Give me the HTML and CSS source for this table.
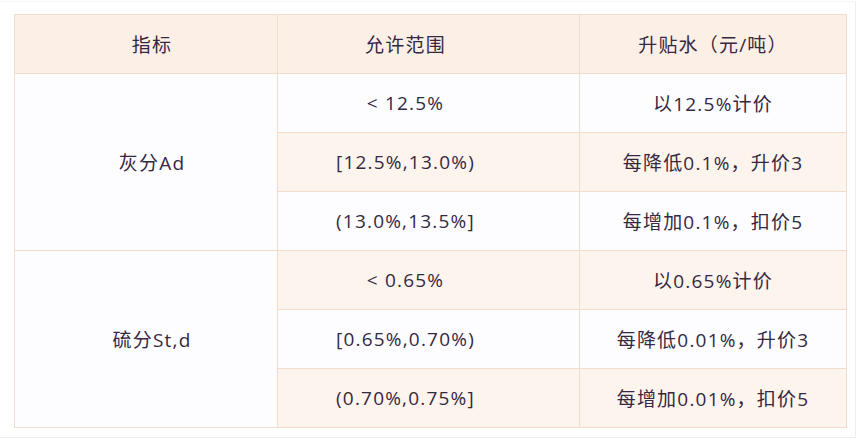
FILE: index.html
```html
<!DOCTYPE html>
<html lang="zh">
<head>
<meta charset="utf-8">
<link rel="stylesheet" href="styles.css">
</head>
<body>
<div class="card">
  <table class="grid">
    <colgroup>
      <col class="c1"><col class="c2"><col class="c3">
    </colgroup>
    <thead>
      <tr><th class="k1">指标</th><th class="k2">允许范围</th><th class="k3">升贴水（元/吨）</th></tr>
    </thead>
    <tbody>
      <tr><td class="name k1" rowspan="3">灰分Ad</td><td class="k2">&lt; 12.5%</td><td class="k3">以12.5%计价</td></tr>
      <tr class="alt"><td class="k2">[12.5%,13.0%)</td><td class="k3">每降低0.1%，升价3</td></tr>
      <tr><td class="k2">(13.0%,13.5%]</td><td class="k3">每增加0.1%，扣价5</td></tr>
      <tr class="alt"><td class="name k1" rowspan="3">硫分St,d</td><td class="k2">&lt; 0.65%</td><td class="k3">以0.65%计价</td></tr>
      <tr><td class="k2">[0.65%,0.70%)</td><td class="k3">每降低0.01%，升价3</td></tr>
      <tr class="alt"><td class="k2">(0.70%,0.75%]</td><td class="k3">每增加0.01%，扣价5</td></tr>
    </tbody>
  </table>
</div>
</body>
</html>
```
FILE: styles.css
```css
html, body {
  margin: 0;
  padding: 0;
  background: #ffffff;
}
.card {
  width: 856px;
  height: 437px;
  box-sizing: border-box;
  margin-top: 1px;
  padding: 12px 0 0 14px;
  border-right: 1px solid #eeeeee;
  border-bottom: 1px solid #eeeeee;
  border-top: 1px solid #f6f6f6;
}
.grid {
  width: 832px;
  border-collapse: collapse;
  table-layout: fixed;
  font-family: "Open Sans", "Noto Sans CJK SC", sans-serif;
  font-size: 19px;
  color: #35283f;
  border: 1px solid #f0ccb6;
}
.c1 { width: 263px; }
.c2 { width: 302px; }
.c3 { width: 267px; }
.grid th, .grid td {
  height: 58px;
  padding: 0;
  text-align: center;
  vertical-align: middle;
  border: 1px solid #f4dccc;
  letter-spacing: 1.2px;
}
.grid .k1 { padding-left: 12px; }
.grid .k2 { padding-right: 46px; }
.grid .k3 { padding-right: 0; }
.grid th {
  font-weight: normal;
  background: #fcefe6;
}
.grid td {
  background: #fdfdff;
}
.grid tr.alt td {
  background: #fdf4ee;
}
.grid tr.alt td.name, .grid td.name {
  background: #fdfdff;
}
```
